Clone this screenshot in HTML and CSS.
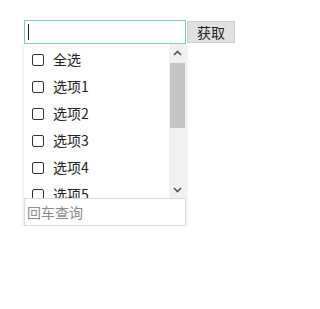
FILE: index.html
```html
<!DOCTYPE html>
<html lang="zh">
<head>
<meta charset="utf-8">
<link rel="stylesheet" href="styles.css">
</head>
<body>
<div class="wrap">
  <div class="bar">
    <div class="field"><span class="caret"></span></div>
    <button class="btn">获取</button>
  </div>
  <div class="dropdown">
    <div class="listarea">
      <ul class="list">
        <li class="row"><span class="box"></span><span class="label">全选</span></li>
        <li class="row"><span class="box"></span><span class="label">选项1</span></li>
        <li class="row"><span class="box"></span><span class="label">选项2</span></li>
        <li class="row"><span class="box"></span><span class="label">选项3</span></li>
        <li class="row"><span class="box"></span><span class="label">选项4</span></li>
        <li class="row"><span class="box"></span><span class="label">选项5</span></li>
      </ul>
      <div class="scrollbar">
        <div class="arrow">
          <svg width="9" height="6" viewBox="0 0 9 6"><path d="M1 5 L4.5 1.5 L8 5" fill="none" stroke="#555" stroke-width="1.6"/></svg>
        </div>
        <div class="track"><div class="thumb"></div></div>
        <div class="arrow">
          <svg width="9" height="6" viewBox="0 0 9 6"><path d="M1 1 L4.5 4.5 L8 1" fill="none" stroke="#555" stroke-width="1.6"/></svg>
        </div>
      </div>
    </div>
    <div class="search">回车查询</div>
  </div>
</div>
</body>
</html>
```
FILE: styles.css
```css
html, body {
  margin: 0;
  padding: 0;
  background: #fff;
}
body {
  font-family: "Noto Sans CJK SC", "Noto Sans", sans-serif;
  font-size: 14px;
  color: #222;
}
.wrap {
  padding: 20px 0 0 24px;
  width: 215px;
}
.bar {
  display: flex;
  align-items: flex-start;
}
.field {
  box-sizing: border-box;
  width: 162px;
  height: 24px;
  border: 1px solid #7fcfae;
  background: #fff;
  display: flex;
  align-items: center;
  padding-left: 3px;
}
.caret {
  width: 1px;
  height: 16px;
  background: #222;
}
.btn {
  box-sizing: border-box;
  margin: 1px 0 0 1px;
  width: 48px;
  height: 22px;
  padding: 0;
  border: 1px solid #cfcfcf;
  background: #e1e1e1;
  font-family: "Noto Sans CJK SC", sans-serif;
  font-size: 14px;
  line-height: 20px;
  color: #222;
}
.dropdown {
  width: 162px;
  background: #fff;
  box-shadow: 0 1px 4px rgba(0, 0, 0, 0.14);
}
.listarea {
  display: flex;
  height: 154px;
  overflow: hidden;
}
.list {
  list-style: none;
  margin: 0;
  padding: 2px 0 0 0;
  flex: 1;
}
.row {
  height: 27px;
  display: flex;
  align-items: center;
  padding-left: 8px;
}
.box {
  box-sizing: border-box;
  width: 12px;
  height: 12px;
  border: 1.5px solid #333;
  border-radius: 2px;
  margin-right: 9px;
}
.label {
  line-height: 27px;
  color: #222;
}
.scrollbar {
  width: 17px;
  background: #f1f1f1;
  display: flex;
  flex-direction: column;
}
.arrow {
  height: 17px;
  display: flex;
  align-items: center;
  justify-content: center;
}
.track {
  flex: 1;
  padding: 2px 1px;
}
.thumb {
  height: 65px;
  background: #c5c5c5;
}
.search {
  box-sizing: border-box;
  height: 28px;
  border: 1px solid #dcdcdc;
  padding-left: 2px;
  line-height: 26px;
  color: #8a8a8a;
  font-size: 14px;
}
```
